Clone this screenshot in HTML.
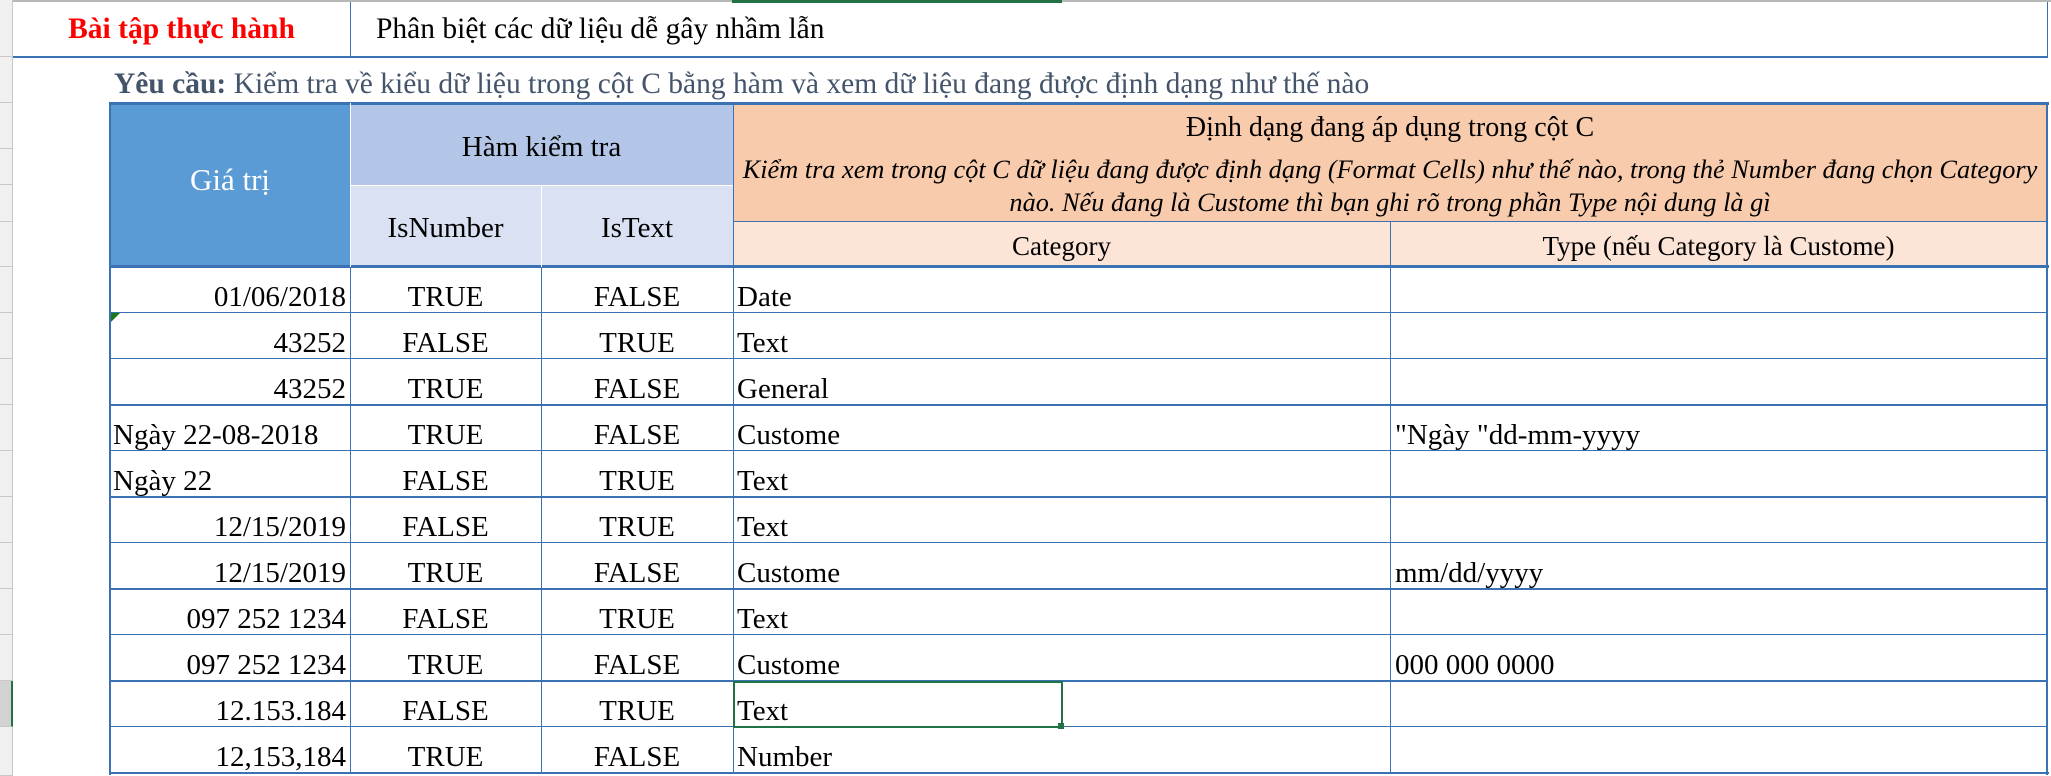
<!DOCTYPE html>
<html><head><meta charset="utf-8"><style>
body{margin:0;width:2051px;height:776px;overflow:hidden;background:#fff;position:relative;font-family:"Liberation Serif","Noto Serif CJK SC",serif;color:#000}
div{position:absolute;box-sizing:border-box}
.t{white-space:nowrap;font-size:29px;line-height:1}
.rh{left:0;width:13px;background:#f0f0f0;border-bottom:1px solid #c8c8c8;border-right:1px solid #c8c8c8}
.hl{height:1px;background:#3a72b4}
.vl{width:1px;background:#3a72b4}
</style></head><body>
<div style="left:0;top:0;width:2051px;height:2px;background:#b8b8b8"></div>
<div style="left:732px;top:0;width:330px;height:3px;background:#217346"></div>
<div class="rh" style="top:0;height:57px"></div>
<div class="rh" style="top:57px;height:46px"></div>
<div class="rh" style="top:103px;height:46px"></div>
<div class="rh" style="top:149px;height:36px"></div>
<div class="rh" style="top:185px;height:37px"></div>
<div class="rh" style="top:222px;height:45px"></div>
<div class="rh" style="top:267px;height:46px"></div>
<div class="rh" style="top:313px;height:46px"></div>
<div class="rh" style="top:359px;height:46px"></div>
<div class="rh" style="top:405px;height:46px"></div>
<div class="rh" style="top:451px;height:46px"></div>
<div class="rh" style="top:497px;height:46px"></div>
<div class="rh" style="top:543px;height:46px"></div>
<div class="rh" style="top:589px;height:46px"></div>
<div class="rh" style="top:635px;height:46px"></div>
<div class="rh" style="top:681px;height:46px;background:#d2d2d2;border-right:2px solid #217346"></div>
<div class="rh" style="top:727px;height:49px"></div>
<div style="left:13px;top:56px;width:2035px;height:2px;background:#3a72b4"></div>
<div class="vl" style="left:350px;top:2px;height:55px"></div>
<div class="vl" style="left:2047px;top:2px;height:55px"></div>
<div class="t" style="left:13px;width:337px;top:15px;text-align:center;color:#f00;font-weight:bold;font-size:29.5px">Bài tập thực hành</div>
<div class="t" style="left:376px;top:15px;font-size:29.5px">Phân biệt các dữ liệu dễ gây nhầm lẫn</div>
<div class="t" style="left:114px;top:70px;font-size:29.5px;color:#44546a"><b>Yêu cầu:</b> Kiểm tra về kiểu dữ liệu trong cột C bằng hàm và xem dữ liệu đang được định dạng như thế nào</div>
<div style="left:110px;top:103px;width:240px;height:164px;background:#5b9bd5"></div>
<div style="left:350px;top:103px;width:383px;height:82px;background:#b4c6e7"></div>
<div style="left:350px;top:185px;width:383px;height:82px;background:#d9e1f2"></div>
<div style="left:733px;top:103px;width:1314px;height:118px;background:#f8cbad"></div>
<div style="left:733px;top:221px;width:1314px;height:46px;background:#fce4d6"></div>
<div class="t" style="left:110px;width:240px;top:164px;text-align:center;color:#fff;font-size:31px">Giá trị</div>
<div class="t" style="left:350px;width:383px;top:133px;text-align:center">Hàm kiểm tra</div>
<div class="t" style="left:350px;width:191px;top:214px;text-align:center">IsNumber</div>
<div class="t" style="left:541px;width:192px;top:214px;text-align:center">IsText</div>
<div class="t" style="left:733px;width:1314px;top:114px;text-align:center;font-size:28px">Định dạng đang áp dụng trong cột C</div>
<div class="t" style="left:733px;width:1314px;top:157px;text-align:center;font-size:26.3px;font-style:italic">Kiểm tra xem trong cột C dữ liệu đang được định dạng (Format Cells) như thế nào, trong thẻ Number đang chọn Category</div>
<div class="t" style="left:733px;width:1314px;top:190px;text-align:center;font-size:26.3px;font-style:italic">nào. Nếu đang là Custome thì bạn ghi rõ trong phần Type nội dung là gì</div>
<div class="t" style="left:733px;width:657px;top:233px;text-align:center;font-size:27px">Category</div>
<div class="t" style="left:1390px;width:657px;top:233px;text-align:center;font-size:27px">Type (nếu Category là Custome)</div>
<div style="left:109px;top:102px;width:1940px;height:3px;background:#3a72b4"></div>
<div class="hl" style="left:350px;top:185px;width:383px;background:#fff"></div>
<div class="hl" style="left:733px;top:221px;width:1314px"></div>
<div style="left:109px;top:265px;width:1940px;height:3px;background:#3a72b4"></div>
<div style="left:109px;top:102px;width:2px;height:673px;background:#3a72b4"></div>
<div class="vl" style="left:350px;top:103px;height:670px;background:#fff"></div>
<div class="vl" style="left:350px;top:267px;height:506px"></div>
<div class="vl" style="left:541px;top:185px;height:82px;background:#fff"></div>
<div class="vl" style="left:541px;top:267px;height:506px"></div>
<div class="vl" style="left:733px;top:103px;height:670px"></div>
<div class="vl" style="left:1390px;top:221px;height:552px"></div>
<div style="left:2046px;top:102px;width:2px;height:673px;background:#3a72b4"></div>
<div class="hl" style="left:110px;top:312px;width:1937px"></div>
<div class="hl" style="left:110px;top:358px;width:1937px"></div>
<div class="hl" style="left:110px;top:404px;width:1937px;height:2px"></div>
<div class="hl" style="left:110px;top:450px;width:1937px"></div>
<div class="hl" style="left:110px;top:496px;width:1937px;height:2px"></div>
<div class="hl" style="left:110px;top:542px;width:1937px"></div>
<div class="hl" style="left:110px;top:588px;width:1937px;height:2px"></div>
<div class="hl" style="left:110px;top:634px;width:1937px"></div>
<div class="hl" style="left:110px;top:680px;width:1937px;height:2px"></div>
<div class="hl" style="left:110px;top:726px;width:1937px"></div>
<div style="left:109px;top:772px;width:1940px;height:2px;background:#3a72b4"></div>
<div style="left:111px;top:313px;width:0;height:0;border-top:9px solid #1a7a1a;border-right:9px solid transparent"></div>
<div style="left:733px;top:681px;width:330px;height:47px;border:2px solid #217346"></div>
<div style="left:1058px;top:723px;width:6px;height:6px;background:#217346"></div>
<div id="d"></div>
<script>
var rows=[["01/06/2018","TRUE","FALSE","Date","",1],["43252","FALSE","TRUE","Text","",1],["43252","TRUE","FALSE","General","",1],["Ngày 22-08-2018","TRUE","FALSE","Custome","\"Ngày \"dd-mm-yyyy",0],["Ngày 22","FALSE","TRUE","Text","",0],["12/15/2019","FALSE","TRUE","Text","",1],["12/15/2019","TRUE","FALSE","Custome","mm/dd/yyyy",1],["097 252 1234","FALSE","TRUE","Text","",1],["097 252 1234","TRUE","FALSE","Custome","000 000 0000",1],["12.153.184","FALSE","TRUE","Text","",1],["12,153,184","TRUE","FALSE","Number","",1]];
var h="";rows.forEach(function(r,i){var y=267+i*46+16;
h+=r[5]?'<div class="t" style="left:110px;width:236px;top:'+y+'px;text-align:right">'+r[0]+'</div>':'<div class="t" style="left:113px;top:'+y+'px">'+r[0]+'</div>';
h+='<div class="t" style="left:350px;width:191px;top:'+y+'px;text-align:center">'+r[1]+'</div>';
h+='<div class="t" style="left:541px;width:192px;top:'+y+'px;text-align:center">'+r[2]+'</div>';
h+='<div class="t" style="left:737px;top:'+y+'px">'+r[3]+'</div>';
h+='<div class="t" style="left:1395px;top:'+y+'px">'+r[4].replace(/"/g,'&quot;')+'</div>';});
document.getElementById('d').outerHTML=h;
</script>
</body></html>
